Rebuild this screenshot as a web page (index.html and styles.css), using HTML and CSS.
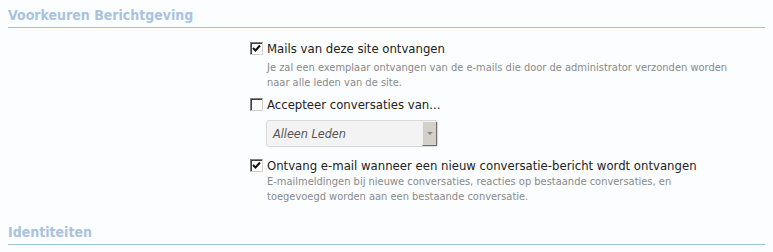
FILE: index.html
```html
<!DOCTYPE html>
<html lang="nl">
<head>
  <meta charset="UTF-8">
  <title>Voorkeuren Berichtgeving</title>
  <link rel="stylesheet" href="styles.css">
</head>
<body>
  <h2 class="section-title">Voorkeuren Berichtgeving</h2>

  <div class="form-block">
    <div class="option">
      <label class="check-row">
        <span class="box"><svg width="9" height="9" viewBox="0 0 9 9"><path d="M1 4 L3.5 6.5 L8 1.5" fill="none" stroke="#111" stroke-width="2"/></svg></span>
        <span class="check-label">Mails van deze site ontvangen</span>
      </label>
      <p class="hint">Je zal een exemplaar ontvangen van de e-mails die door de administrator verzonden worden naar alle leden van de site.</p>
    </div>

    <div class="option">
      <label class="check-row">
        <span class="box"></span>
        <span class="check-label">Accepteer conversaties van...</span>
      </label>
      <div class="select-box">
        <span class="select-value">Alleen Leden</span>
        <span class="select-arrow"></span>
      </div>
    </div>

    <div class="option">
      <label class="check-row">
        <span class="box"><svg width="9" height="9" viewBox="0 0 9 9"><path d="M1 4 L3.5 6.5 L8 1.5" fill="none" stroke="#111" stroke-width="2"/></svg></span>
        <span class="check-label">Ontvang e-mail wanneer een nieuw conversatie-bericht wordt ontvangen</span>
      </label>
      <p class="hint hint-tight">E-mailmeldingen bij nieuwe conversaties, reacties op bestaande conversaties, en<br>toegevoegd worden aan een bestaande conversatie.</p>
    </div>
  </div>

  <h2 class="section-title">Identiteiten</h2>
</body>
</html>
```

FILE: styles.css
```css
body {
  margin: 0;
  padding: 7px 8px 0 8px;
  background: #fbfdff;
  font-family: "DejaVu Sans Condensed", "DejaVu Sans", sans-serif;
  color: #222;
}
.section-title {
  margin: 0;
  height: 17px;
  padding: 0 0 3px 0;
  font-size: 14px;
  line-height: 17px;
  font-weight: bold;
  color: #a9c3dd;
  border-bottom: 1px solid #9cc3d6;
}
.form-block {
  padding: 12px 0 14px 242px;
}
.option {
  margin-bottom: 6px;
}
.check-row {
  display: flex;
  align-items: center;
  gap: 4px;
  height: 16px;
}
.box {
  width: 13px;
  height: 13px;
  box-sizing: border-box;
  background: #fff;
  border: 1px solid #808080;
  border-right-color: #d4d0c8;
  border-bottom-color: #d4d0c8;
  box-shadow: inset 1px 1px 0 #404040;
  display: flex;
  align-items: center;
  justify-content: center;
}
.check-label {
  font-size: 13px;
}
.hint {
  margin: 4px 0 0 17px;
  width: 470px;
  font-size: 11px;
  line-height: 15px;
  color: #8a8a8a;
}
.hint-tight {
  margin-top: 1px;
}
.select-box {
  margin: 8px 0 10px 16px;
  width: 172px;
  height: 27px;
  display: flex;
  align-items: stretch;
  justify-content: space-between;
  background: #f3f3f3;
  border: 1px solid #d8d8d8;
  border-radius: 3px;
  box-sizing: border-box;
}
.select-value {
  display: flex;
  align-items: center;
  padding-left: 6px;
  font-style: italic;
  font-size: 12.5px;
  color: #555;
}
.select-arrow {
  width: 15px;
  margin: 1px 0 0 0;
  background: #d4d0c8;
  border-left: 1px solid #eeeeee;
  border-right: 1px solid #707070;
  border-bottom: 1px solid #707070;
  box-sizing: border-box;
  display: flex;
  align-items: center;
  justify-content: center;
}
.select-arrow::after {
  content: "";
  border-left: 3px solid transparent;
  border-right: 3px solid transparent;
  border-top: 3px solid #8a8a8a;
}
```
